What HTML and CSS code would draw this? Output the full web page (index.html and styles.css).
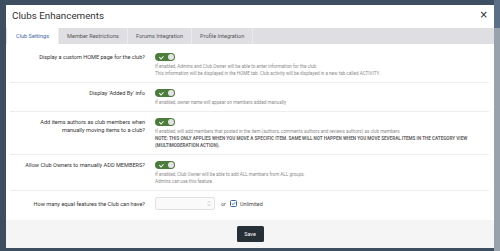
FILE: index.html
```html
<!DOCTYPE html>
<html lang="en">
<head>
  <meta charset="UTF-8">
  <title>Clubs Enhancements</title>
  <link rel="stylesheet" href="styles.css">
</head>
<body>
  <div class="modal">
    <header class="modal-head">
      <h1>Clubs Enhancements</h1>
      <button class="modal-close">&times;</button>
    </header>

    <nav class="tabs">
      <a class="tab active" href="#">Club Settings</a>
      <a class="tab" href="#">Member Restrictions</a>
      <a class="tab" href="#">Forums Integration</a>
      <a class="tab" href="#">Profile Integration</a>
    </nav>

    <form class="settings">
      <div class="row">
        <label class="row-label">Display a custom HOME page for the club?</label>
        <div class="row-field">
          <span class="toggle"></span>
          <p class="desc">If enabled, Admins and Club Owner will be able to enter information for the club.<br>This information will be displayed in the HOME tab. Club activity will be displayed in a new tab called ACTIVITY.</p>
        </div>
      </div>

      <div class="row">
        <label class="row-label">Display 'Added By' info</label>
        <div class="row-field">
          <span class="toggle"></span>
          <p class="desc">If enabled, owner name will appear on members added manually</p>
        </div>
      </div>

      <div class="row">
        <label class="row-label">Add items authors as club members when manually moving items to a club?</label>
        <div class="row-field">
          <span class="toggle"></span>
          <p class="desc">If enabled, will add members that posted in the item (authors, comments authors and reviews authors) as club members<br><strong>NOTE: THIS ONLY APPLIES WHEN YOU MOVE A SPECIFIC ITEM. SAME WILL NOT HAPPEN WHEN YOU MOVE SEVERAL ITEMS IN THE CATEGORY VIEW (MULTIMODERATION ACTION).</strong></p>
        </div>
      </div>

      <div class="row">
        <label class="row-label">Allow Club Owners to manually ADD MEMBERS?</label>
        <div class="row-field">
          <span class="toggle"></span>
          <p class="desc">If enabled, Club Owner will be able to add ALL members from ALL groups.<br>Admins can use this feature.</p>
        </div>
      </div>

      <div class="row row-last">
        <label class="row-label">How many equal features the Club can have?</label>
        <div class="row-field inline">
          <span class="num-input">
            <svg class="spin" width="4" height="7" viewBox="0 0 4 7"><path d="M0.5 3 L2 1.3 L3.5 3 M0.5 4 L2 5.7 L3.5 4" fill="none" stroke="#c4c4c4" stroke-width="0.7"/></svg>
          </span>
          <span class="or">or</span>
          <span class="check">
            <svg width="5" height="5" viewBox="0 0 5 5"><path d="M0.8 2.6 L2 3.7 L4.2 1.2" fill="none" stroke="#3d6aa3" stroke-width="0.9"/></svg>
          </span>
          <span class="check-label">Unlimited</span>
        </div>
      </div>
    </form>

    <footer class="modal-foot">
      <button class="btn-save" type="button">Save</button>
    </footer>
  </div>
</body>
</html>
```

FILE: styles.css
```css
/* Reset & Base */
* { margin: 0; padding: 0; box-sizing: border-box; }
body {
  width: 500px;
  height: 251px;
  overflow: hidden;
  padding-top: 5px;
  font-family: 'Roboto', 'Liberation Sans', sans-serif;
  color: #333;
  background:
    linear-gradient(180deg, #5b6f87 0 28px, transparent 28px) right top / 6px 100% no-repeat,
    linear-gradient(90deg, #3d4e60 494px, #98a2ac 494px);
}

/* Modal */
.modal {
  width: 488px;
  height: 243px;
  margin-left: 6px;
  background: #fff;
  display: flex;
  flex-direction: column;
}
.modal-head {
  height: 23px;
  display: flex;
  align-items: center;
  justify-content: space-between;
  padding: 0 6px 3px 6px;
}
.modal-head h1 {
  font-size: 9.8px;
  font-weight: 400;
  color: #333;
}
.modal-close {
  border: none;
  background: none;
  font-size: 10px;
  line-height: 1;
  color: #222;
  font-family: 'DejaVu Sans', sans-serif;
  cursor: pointer;
}

/* Tabs */
.tabs {
  height: 16px;
  display: flex;
  background: #dfdfe3;
  padding-left: 1px;
}
.tab {
  display: flex;
  align-items: center;
  padding: 0 8px;
  font-size: 5.6px;
  color: #555;
  text-decoration: none;
  border-right: 1px solid #ececef;
}
.tab.active {
  background: #fff;
  color: #3d6aa3;
  padding: 0 9px;
}

/* Settings form */
.settings {
  flex: 1;
  padding: 3px 5px 0 4px;
}
.row {
  display: grid;
  grid-template-columns: 135px 1fr;
  column-gap: 10px;
  padding: 6px 0 5px;
  border-bottom: 1px solid #eeeeee;
}
.row-last {
  border-bottom: none;
  align-items: center;
}
.row-label {
  padding-left: 8px;
  text-align: right;
  font-size: 5.6px;
  line-height: 8px;
  color: #333;
}
.row-field.inline {
  display: flex;
  align-items: center;
}
.desc {
  max-width: 322px;
  margin-top: 2px;
  font-size: 4.6px;
  line-height: 7px;
  color: #8c8c8c;
}
.desc strong {
  color: #666;
  font-weight: 700;
}

/* Toggle */
.toggle {
  display: block;
  position: relative;
  width: 20px;
  height: 8px;
  border-radius: 4px;
  background: #4b7c3c;
}
.toggle::before {
  content: "";
  position: absolute;
  left: 5px;
  top: 2.2px;
  width: 1.6px;
  height: 2.8px;
  border: solid #fff;
  border-width: 0 0.9px 0.9px 0;
  transform: rotate(45deg);
}
.toggle::after {
  content: "";
  position: absolute;
  right: 1px;
  top: 1px;
  width: 6px;
  height: 6px;
  border-radius: 50%;
  background: #e4e4e4;
}

/* Number input */
.num-input {
  width: 60px;
  height: 13px;
  border: 1px solid #e2e2e2;
  border-radius: 2px;
  background: #fafafa;
  display: flex;
  align-items: center;
  justify-content: flex-end;
  padding-right: 3px;
}
.or {
  margin: 0 4px 0 6px;
  font-size: 5.4px;
  color: #555;
}
.check {
  width: 7px;
  height: 7px;
  border: 1px solid #3d6aa3;
  border-radius: 1.5px;
  display: flex;
  align-items: center;
  justify-content: center;
}
.check-label {
  margin-left: 3px;
  font-size: 5.4px;
  color: #444;
}

/* Footer */
.modal-foot {
  height: 28px;
  background: #f5f5f5;
  display: flex;
  justify-content: center;
  padding-top: 6px;
}
.btn-save {
  width: 27px;
  height: 16px;
  border: none;
  border-radius: 1.5px;
  background: #263036;
  color: #fff;
  font-family: 'Roboto', sans-serif;
  font-size: 5.4px;
  cursor: pointer;
}
```
